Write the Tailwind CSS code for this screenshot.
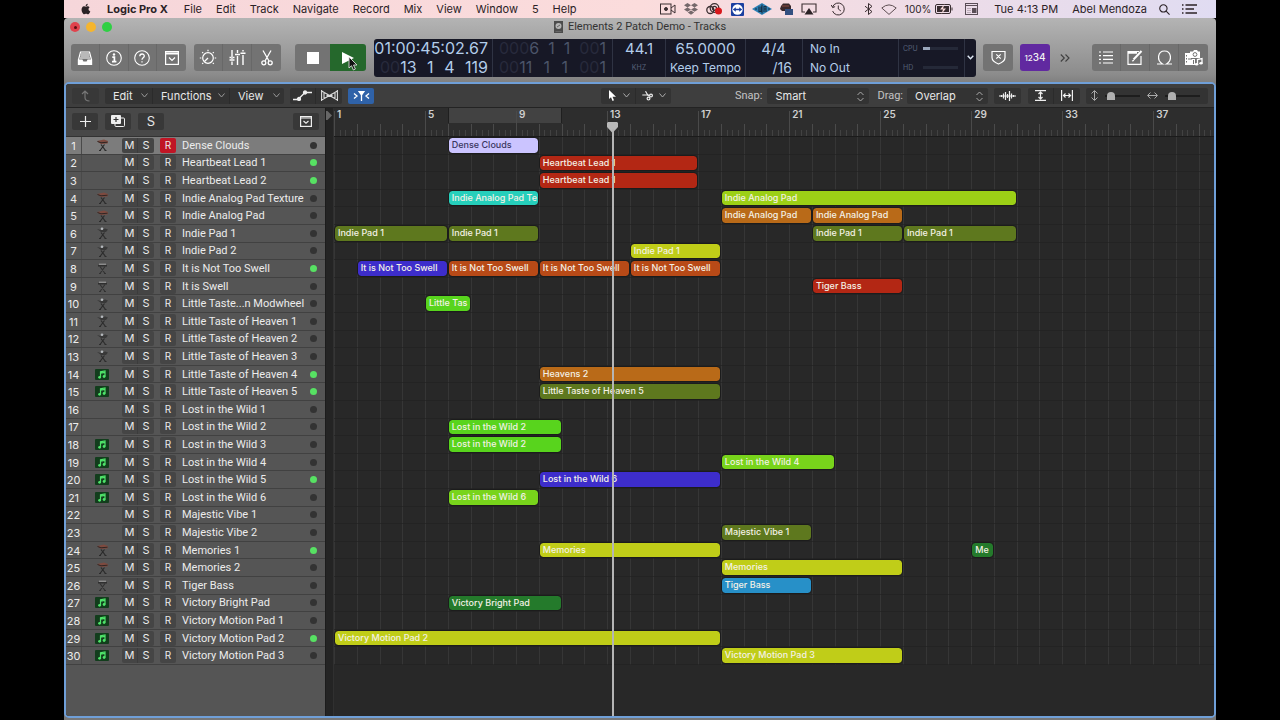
<!DOCTYPE html>
<html lang="en">
<head>
  <meta charset="UTF-8">
  <meta name="viewport" content="width=device-width, initial-scale=1.0">
  <title>Elements 2 Patch Demo - Tracks</title>
  <script src="https://cdn.jsdelivr.net/npm/@tailwindcss/browser@4"></script>
</head>

<body class="bg-black px-16 min-h-screen flex flex-col font-['Inter','Liberation_Sans',sans-serif] text-[#e4e4e4] overflow-hidden">

  <!-- System menu bar -->
  <header class="h-[18px] flex items-center pl-4 pr-[19px] text-[11px] leading-4 text-[#2b2226] bg-linear-to-r from-[#f6d6da] via-[#fbdcdc] to-[#e0dcf2] whitespace-nowrap">
    <svg class="w-3 h-3 mr-[15px]" viewBox="0 0 24 24" fill="#2b2226"><path d="M17 12.700c0-2.600 2.100-3.900 2.200-4-1.200-1.800-3.100-2-3.700-2-1.600-.2-3.100.9-3.900.9-.8 0-2-.9-3.400-.9C6.500 6.800 4.900 7.700 4 9.300c-1.900 3.200-.5 8 1.300 10.600.9 1.300 2 2.800 3.400 2.700 1.400-.1 1.900-.9 3.500-.9s2.100.9 3.500.9c1.500 0 2.400-1.300 3.300-2.600 1-1.500 1.500-3 1.500-3-.1-.1-3.500-1.300-3.500-4.300zM14.400 4.900C15.100 4 15.600 2.800 15.500 1.500c-1.100.1-2.400.7-3.100 1.600-.7.8-1.300 2-1.100 3.200 1.200.1 2.400-.6 3.100-1.400z"/></svg>
    <nav class="flex gap-[14px]">
      <b class="font-bold mr-0.5">Logic Pro X</b>
      <a href="#">File</a><a href="#">Edit</a><a href="#">Track</a><a href="#">Navigate</a><a href="#">Record</a><a href="#">Mix</a><a href="#">View</a><a href="#">Window</a><a href="#">5</a><a href="#">Help</a>
    </nav>
    <div class="ml-auto flex items-center gap-2">
      <svg class="w-4 h-3" viewBox="0 0 16 12" fill="none" stroke="#3a2e31"><rect x=".5" y="1" width="10.500" height="10"/><path d="M11 5l4-3v8l-4-3"/><circle cx="6" cy="6" r="1.500" fill="#3a2e31"/></svg>
      <svg class="w-[14px] h-3" viewBox="0 0 14 12" fill="#75686b"><path d="M3.500 0L7 2.200 3.500 4.400 0 2.200zM10.500 0L14 2.200l-3.500 2.200L7 2.200zM3.500 4.400L7 6.600 3.500 8.800 0 6.600zM10.500 4.400L14 6.600l-3.500 2.200L7 6.600zM7 7.600l3.200 2L7 11.800 3.800 9.600z"/></svg>
      <svg class="w-[17px] h-3" viewBox="0 0 17 12" fill="none" stroke="#3a2e31" stroke-width="1.300"><circle cx="8.500" cy="5" r="4.300"/><circle cx="4.300" cy="7" r="3.500"/><circle cx="8.500" cy="5.300" r="2"/><circle cx="12.500" cy="8" r="3.500" fill="#d8181c" stroke="none"/></svg>
      <svg class="w-[13px] h-[13px]" viewBox="0 0 13 13"><rect width="13" height="13" rx="1" fill="#1c3fa0"/><circle cx="6.500" cy="6.500" r="5.200" fill="#fff"/><path d="M1.800 6.500l3-2.300v1.600h3.400V4.200l3 2.300-3 2.300V7.200H4.800v1.600z" fill="#1c3fa0"/></svg>
      <svg class="w-5 h-3" viewBox="0 0 20 12"><path d="M0 6L10 0l10 6-10 6z" fill="#2b7fb4"/><path d="M3 6h2M7 3.500v5h2v-5M12 9V3.500h2V9M12 6h2M16 6h2M10 1.500v9" stroke="#172f45" stroke-width="1.100" fill="none"/></svg>
      <svg class="w-[13px] h-3" viewBox="0 0 13 12"><path d="M1 3l2-2.500h6L11 3v5H2L0 6z" fill="#38282b"/><rect x="5" y="6" width="8" height="6" fill="#334f80"/><path d="M2 3h7" stroke="#8b4d43"/></svg>
      <svg class="w-4 h-3" viewBox="0 0 16 12"><path d="M4 9H1V1h14v8h-3" fill="none" stroke="#3a2e31" stroke-width="1.100"/><path d="M8 5l4.500 6.500h-9z" fill="#2b2226"/></svg>
      <svg class="w-[14px] h-[14px] ml-[6px]" viewBox="0 0 14 14" fill="none" stroke="#3a2e31"><path d="M1.600 5a6 6 0 1 1 0 4M.3 3l1.300 2.600 2.500-1M7.300 3.500V7l2.600 2"/></svg>
      <svg class="w-[9px] h-3 ml-[11px]" viewBox="0 0 9 12" fill="none" stroke="#3a2e31"><path d="M1 3.200L8 8.600 4.500 11.500V.5L8 3.400 1 8.800"/></svg>
      <svg class="w-4 h-[11px]" viewBox="0 0 16 11" fill="none" stroke="#5d4e52"><path d="M.8 4Q8-2.200 15.200 4L8 10.400z"/></svg>
      <span class="text-[10px]">100%</span>
      <svg class="w-[18px] h-[10px] -ml-1" viewBox="0 0 18 10"><rect x=".5" y=".5" width="15" height="9" rx="1.500" fill="none" stroke="#3a2e31"/><rect x="2" y="2" width="12" height="6" fill="#3a2e31"/><path d="M9.500 0L5 5.500h3L6.500 10 11 4.500H8z" fill="#fbdcdc"/><path d="M17 3.500v3" stroke="#3a2e31"/></svg>
      <svg class="w-[13px] h-3 ml-1" viewBox="0 0 13 12"><rect x=".5" y=".5" width="12" height="11" fill="none" stroke="#5a4e57"/><path d="M.5 2.500h12" stroke="#5a4e57"/><path d="M3 5v5M5 5v5" stroke="#8d808a" stroke-dasharray="1 1"/><rect x="7" y="5" width="4.500" height="5" fill="#5a4e57"/></svg>
      <span class="ml-2">Tue 4:13 PM</span>
      <span class="ml-[6px]">Abel Mendoza</span>
      <svg class="w-[11px] h-[11px] ml-1" viewBox="0 0 12 12" fill="none" stroke="#2b2226" stroke-width="1.200"><circle cx="4.800" cy="4.800" r="4"/><path d="M7.800 7.800l3.700 3.700"/></svg>
      <svg class="w-[15px] h-[10px] ml-1" viewBox="0 0 15 10" stroke="#2b2226" stroke-width="1.300"><path d="M0 1h1.500M0 5h1.500M0 9h1.500M3.500 1H15M3.500 5H12M3.500 9H15"/></svg>
    </div>
  </header>

  <div class="grow flex flex-col rounded-t-[4px] bg-linear-to-b from-[#b4b4b4] via-[#8c8c8c] via-8% to-[#777] to-10%">

    <!-- Title bar -->
    <div class="h-[21px] px-[6px] pb-[3px] grid grid-cols-[1fr_auto_1fr] items-center text-[#333]">
      <div class="flex gap-[6px]">
        <button aria-label="Close" class="size-[10px] rounded-full bg-[#e0434d] flex items-center justify-center"><i class="size-[3px] rounded-full bg-[#5c0d12]"></i></button>
        <button aria-label="Minimise" class="size-[10px] rounded-full bg-[#f5b52e]"></button>
        <button aria-label="Zoom" class="size-[10px] rounded-full bg-[#2fd044]"></button>
      </div>
      <h1 class="flex items-center gap-[5px] font-['Roboto','Liberation_Sans',sans-serif] text-[11px] leading-4">
        <svg class="w-[9px] h-3" viewBox="0 0 9 12"><rect width="9" height="12" fill="#4c4c4c"/><circle cx="4.500" cy="5" r="3" fill="#b5b5b5"/><path d="M3 6l3-2M1.500 10.500h6" stroke="#666"/></svg>
        Elements 2 Patch Demo - Tracks
      </h1>
    </div>

    <!-- Control bar -->
    <div class="h-[43px] pl-[7px] pr-2 pb-[6px] flex items-center text-[#f2f2f2]">
      <div class="shrink-0 w-[115px] grid grid-cols-4 h-[27px] rounded-[3px] overflow-hidden bg-[#737373] divide-x divide-[#686868]">
        <button aria-label="Library" class="flex items-center justify-center"><svg class="w-4 h-4" viewBox="0 0 16 16" fill="none" stroke="#fff" stroke-width="1.200"><path d="M3.500 2h9l2 7.500v5h-13v-5z"/><path d="M4 4h8M3.500 6h9M3 8h10"/><path d="M1.500 10H5l1 2h4l1-2h3.500v4.500h-13z" fill="#fff"/></svg></button>
        <button aria-label="Inspector" class="flex items-center justify-center"><svg class="w-4 h-4" viewBox="0 0 16 16" fill="none" stroke="#fff" stroke-width="1.100"><circle cx="8" cy="8" r="7.300"/><circle cx="8" cy="4.500" r="1.200" fill="#fff" stroke="none"/><path d="M6.300 7.200H8.400v4.300M6 11.700h4.400" stroke-width="1.700"/></svg></button>
        <button aria-label="Quick Help" class="flex items-center justify-center"><svg class="w-4 h-4" viewBox="0 0 16 16" fill="none" stroke="#fff" stroke-width="1.100"><circle cx="8" cy="8" r="7.300"/><path d="M5.800 6.300c0-3 4.500-3 4.500-.3C10.300 7.800 8 7.800 8 9.800M8 11.200v1.300" stroke-width="1.300"/></svg></button>
        <button aria-label="Toolbar" class="flex items-center justify-center"><svg class="w-[14px] h-[14px]" viewBox="0 0 14 14" fill="none" stroke="#fff" stroke-width="1.200"><rect x=".6" y=".6" width="12.800" height="12.800"/><path d="M.6 2.500h12.800" stroke-width="1.800"/><path d="M4 6.500l3 3 3-3"/></svg></button>
      </div>
      <div class="shrink-0 ml-2 w-[87px] grid grid-cols-3 h-[27px] rounded-[3px] overflow-hidden bg-[#737373] divide-x divide-[#686868]">
        <button aria-label="Smart Controls" class="flex items-center justify-center"><svg class="w-[18px] h-[18px]" viewBox="0 0 18 18" fill="none" stroke="#fff" stroke-width="1.200"><circle cx="9" cy="9" r="5.300"/><path d="M9 9l-3.500 3.500"/><path d="M9 .8v1.500M3.200 3.200l1 1M14.800 3.200l-1 1M.8 9h1.500M17.200 9h-1.500M3.200 14.800l1-1M14.800 14.800l-1-1"/></svg></button>
        <button aria-label="Mixer" class="flex items-center justify-center"><svg class="w-[17px] h-4" viewBox="0 0 17 16" fill="none" stroke="#fff" stroke-width="1.400"><path d="M3 0v9M3 11.500V15M8.500 0v3M8.500 6v9M14 0v1.500M14 5v10M.5 10h5M6 4.500h5M11.500 3.200h5M.5 7.500h1.500M4 7.500h1.500"/></svg></button>
        <button aria-label="Editors" class="flex items-center justify-center"><svg class="w-3 h-4" viewBox="0 0 12 16" fill="none" stroke="#fff" stroke-width="1.300"><path d="M2 .5l6 10.500M10 .5L4 11"/><circle cx="2.800" cy="12.800" r="2"/><circle cx="9.200" cy="12.800" r="2"/></svg></button>
      </div>
      <div class="shrink-0 relative ml-[14px] flex h-[27px]">
        <button aria-label="Stop" class="w-[35px] rounded-l-[3px] bg-[#737373] flex items-center justify-center"><i class="size-3 bg-white"></i></button>
        <button aria-label="Play" class="w-[36px] rounded-r-[3px] bg-[#25682c] flex items-center justify-center"><svg class="w-3 h-3" viewBox="0 0 12 12" fill="#fff"><path d="M0 0l12 6-12 6z"/></svg></button>
        <svg class="absolute left-[53px] top-3 w-[10px] h-[15px]" viewBox="0 0 10 15"><path d="M1 1v11l2.500-2.300L5.400 14l2-1-1.900-4H9z" fill="#111" stroke="#ddd" stroke-width=".9"/></svg>
      </div>

      <!-- LCD display -->
      <div class="ml-2 grow basis-0 min-w-0 h-[38px] rounded-[3px] bg-[#171826] text-[#b3cdea] grid grid-cols-[minmax(0,119fr)_minmax(0,120fr)_minmax(0,53fr)_minmax(0,80fr)_minmax(0,57fr)_minmax(0,96fr)_minmax(0,66fr)_minmax(0,11fr)] text-[16px] leading-[19px] whitespace-nowrap divide-x divide-[#2f3343]">
        <div class="flex flex-col items-end pr-1">
          <span>01:00:45:02.67</span>
          <span class="w-[108px] flex justify-between"><span><i class="not-italic text-[#272a3c]">00</i>13</span><span>1</span><span>4</span><span>119</span></span>
        </div>
        <div class="flex flex-col px-[6px] text-[#4b5469]">
          <span class="flex justify-between"><span><i class="not-italic text-[#272a3c]">000</i>6</span><span>1</span><span>1</span><span><i class="not-italic text-[#272a3c]">00</i>1</span></span>
          <span class="flex justify-between"><span><i class="not-italic text-[#272a3c]">00</i>11</span><span>1</span><span>1</span><span><i class="not-italic text-[#272a3c]">00</i>1</span></span>
        </div>
        <div class="flex flex-col items-center"><span class="text-[15px]">44.1</span><span class="text-[7px] text-[#566078]">KHZ</span></div>
        <div class="flex flex-col items-center"><span class="text-[15px]">65.0000</span><span class="text-[12px]">Keep Tempo</span></div>
        <div class="flex flex-col items-end pr-[10px]"><span class="text-[15px] pr-[6px]">4/4</span><span class="text-[14px]">/16</span></div>
        <div class="flex flex-col pl-[7px] text-[12px]"><span>No In</span><span>No Out</span></div>
        <div class="flex flex-col pl-1 pr-[6px] text-[7px] text-[#566078]">
          <span class="flex items-center"><span class="w-[20px]">CPU</span><i class="h-[3px] grow bg-[#252938]"><i class="block h-[3px] w-[7px] bg-[#9aa7bb]"></i></i></span>
          <span class="flex items-center"><span class="w-[20px]">HD</span><i class="h-[3px] grow bg-[#252938]"></i></span>
        </div>
        <button aria-label="Display mode" class="flex items-center justify-center"><svg class="w-[7px] h-[5px]" viewBox="0 0 7 5" fill="none" stroke="#dfe8f5" stroke-width="1.400"><path d="M.7.800L3.500 3.800 6.300.800"/></svg></button>
      </div>

      <button aria-label="Replace" class="shrink-0 ml-[7px] w-[30px] h-[27px] rounded-[3px] bg-[#737373] flex items-center justify-center"><svg class="w-[15px] h-[15px]" viewBox="0 0 15 15" fill="none" stroke="#fff" stroke-width="1.200"><path d="M1 1.500h13v6c0 3.500-4 5.500-6.500 6.500C5 13 1 11 1 7.500zM5.300 4.300l4.400 4.400M9.700 4.300L5.300 8.700"/></svg></button>
      <button aria-label="Count in" class="shrink-0 ml-[7px] w-[30px] h-[27px] rounded-[3px] bg-[#6129a0] text-[10px] leading-4 font-medium"><span class="text-[8px]">12</span>34</button>
      <button aria-label="More" class="shrink-0 ml-[10px] w-[10px] h-[27px] flex items-center"><svg class="w-[10px] h-2" viewBox="0 0 10 8" fill="none" stroke="#3f3f3f" stroke-width="1.100"><path d="M.8.500L4.300 4 .8 7.500M5.500.500L9 4 5.500 7.500"/></svg></button>
      <div class="shrink-0 ml-[22px] w-[116px] grid grid-cols-4 h-[27px] rounded-[3px] overflow-hidden bg-[#737373] divide-x divide-[#686868]">
        <button aria-label="List Editors" class="flex items-center justify-center"><svg class="w-[14px] h-[13px]" viewBox="0 0 14 13" stroke="#fff" stroke-width="1.200"><path d="M0 1h2M0 4.600h2M0 8.300h2M0 12h2M4 1h10M4 4.600h10M4 8.300h10M4 12h10"/></svg></button>
        <button aria-label="Note Pads" class="flex items-center justify-center"><svg class="w-4 h-[15px]" viewBox="0 0 16 15" fill="none" stroke="#fff" stroke-width="1.200"><path d="M14 6v8.300H1V1.500h11"/><path d="M1 2.800h9" stroke-width="2"/><path d="M6.500 9.500L14.500 1" stroke-width="2"/><path d="M5 11l2-.6"/></svg></button>
        <button aria-label="Apple Loops" class="flex items-center justify-center"><svg class="w-[15px] h-[15px]" viewBox="0 0 15 15" fill="none" stroke="#fff" stroke-width="1.200"><path d="M0 14h5.500c-6-3.500-5-13 2-13s8 9.500 2 13H15"/></svg></button>
        <button aria-label="Browsers" class="flex items-center justify-center"><svg class="w-[18px] h-4" viewBox="0 0 18 16"><path d="M0 3h6v12H0z" fill="#fff"/><path d="M6 9h4v6H6z" fill="#fff"/><path d="M1.500 5v9" stroke="#737373" stroke-dasharray="1.500 1.500"/><path d="M3 9h4M8.500 10v4" stroke="#737373"/><path d="M5 1.500h3L9 0h3l1 1.500h2V8H5z" fill="#fff"/><circle cx="10" cy="4.500" r="1.900" fill="none" stroke="#737373"/><path d="M12.500 14V9.500l4.500-1V13" fill="none" stroke="#fff" stroke-width="1.300"/><ellipse cx="11.600" cy="14.200" rx="1.700" ry="1.300" fill="#fff"/><ellipse cx="16" cy="13.200" rx="1.700" ry="1.300" fill="#fff"/></svg></button>
      </div>
    </div>

    <!-- Tracks window -->
    <main class="grow flex flex-col mb-[2px] border-2 border-[#6f9fd8] rounded-[5px] bg-[#282828] overflow-hidden">

      <!-- Tracks menu bar -->
      <div class="h-6 px-[6px] flex items-center bg-[#3e3e3e] border-b border-[#232323] text-[11px] leading-4 text-[#e8e8e8]">
        <button aria-label="Up" class="w-[27px] h-4 rounded-[2px] bg-[#383838] flex items-center justify-center"><svg class="w-[9px] h-3" viewBox="0 0 9 12" fill="none" stroke="#777" stroke-width="1.200"><path d="M1 4l3-3 3 3M4 1v6.500Q4 11 8.500 11"/></svg></button>
        <div class="ml-[6px] flex h-4 rounded-[2px] bg-[#333] divide-x divide-[#2b2b2b]">
          <button class="w-[48px] pl-2 pr-1 flex items-center justify-between">Edit<svg class="w-[7px] h-[5px]" viewBox="0 0 7 5" fill="none" stroke="#999"><path d="M.5.500l3 3.500 3-3.500"/></svg></button>
          <button class="w-[77px] pl-2 pr-1 flex items-center justify-between">Functions<svg class="w-[7px] h-[5px]" viewBox="0 0 7 5" fill="none" stroke="#999"><path d="M.5.500l3 3.500 3-3.500"/></svg></button>
          <button class="w-[54px] pl-2 pr-1 flex items-center justify-between">View<svg class="w-[7px] h-[5px]" viewBox="0 0 7 5" fill="none" stroke="#999"><path d="M.5.500l3 3.500 3-3.500"/></svg></button>
        </div>
        <div class="ml-[6px] flex h-4 rounded-[2px] bg-[#333] divide-x divide-[#2b2b2b]">
          <button aria-label="Automation" class="w-[26px] flex items-center justify-center"><svg class="w-[19px] h-[11px]" viewBox="0 0 19 11" fill="none" stroke="#eee" stroke-width="1.300"><path d="M0 9.500h5l7-7h7"/><circle cx="6" cy="9" r="1.500" fill="#eee"/><circle cx="12" cy="2.500" r="1.500" fill="#eee"/></svg></button>
          <button aria-label="Flex" class="w-[26px] flex items-center justify-center"><svg class="w-[17px] h-[11px]" viewBox="0 0 17 11" fill="none" stroke="#ddd" stroke-width="1.100"><path d="M.6 0v11M16.400 0v11M.6 1l15.800 9M.6 10L16.400 1M6 3.500v4M11 3.500v4M3 2v7M14 2v7"/></svg></button>
        </div>
        <button aria-label="Catch playhead" class="ml-[6px] w-[26px] h-4 rounded-[2px] bg-[#2f62a8] flex items-center justify-center"><svg class="w-[17px] h-[10px]" viewBox="0 0 17 10" fill="none" stroke="#fff" stroke-width="1.300"><path d="M1 2.500L4 5 1 7.500M16 2.500L13 5l3 2.500M8.500 2v8"/><path d="M6 .5h5L8.500 4z" fill="#fff"/></svg></button>
        <div class="ml-auto mr-16 flex h-4 rounded-[2px] bg-[#333] divide-x divide-[#2b2b2b]">
          <button aria-label="Pointer tool" class="w-[35px] pl-2 pr-[5px] flex items-center justify-between"><svg class="w-[7px] h-[11px]" viewBox="0 0 7 11" fill="#fff"><path d="M0 0v9l2-1.800L3.500 11l1.500-.7L3.500 6.800H7z"/></svg><svg class="w-[7px] h-[5px]" viewBox="0 0 7 5" fill="none" stroke="#aaa"><path d="M.5.500l3 3.500 3-3.500"/></svg></button>
          <button aria-label="Scissors tool" class="w-[35px] pl-[6px] pr-[5px] flex items-center justify-between"><svg class="w-[11px] h-[10px]" viewBox="0 0 11 10" fill="none" stroke="#eee" stroke-width="1.200"><path d="M.3 4h7M3.500.300l3 5"/><circle cx="9" cy="4.600" r="1.400"/><circle cx="6.500" cy="7.600" r="1.400"/></svg><svg class="w-[7px] h-[5px]" viewBox="0 0 7 5" fill="none" stroke="#aaa"><path d="M.5.500l3 3.500 3-3.500"/></svg></button>
        </div>
        <label for="snap" class="font-['Roboto','Liberation_Sans',sans-serif] text-[#c4c4c4]">Snap:</label>
        <div class="relative ml-[5px] mr-[8px]">
          <select id="snap" class="block appearance-none w-[102px] h-4 rounded-[2px] bg-[#333] pl-2 leading-4"><option>Smart</option></select>
          <svg class="absolute right-[5px] top-[3px] w-[7px] h-[11px] pointer-events-none" viewBox="0 0 7 11" fill="none" stroke="#aaa"><path d="M.5 4l3-3 3 3M.5 7l3 3 3-3"/></svg>
        </div>
        <label for="drag" class="font-['Roboto','Liberation_Sans',sans-serif] text-[#c4c4c4]">Drag:</label>
        <div class="relative ml-[4px]">
          <select id="drag" class="block appearance-none w-[81px] h-4 rounded-[2px] bg-[#333] pl-2 leading-4"><option>Overlap</option></select>
          <svg class="absolute right-[5px] top-[3px] w-[7px] h-[11px] pointer-events-none" viewBox="0 0 7 11" fill="none" stroke="#aaa"><path d="M.5 4l3-3 3 3M.5 7l3 3 3-3"/></svg>
        </div>
        <button aria-label="Waveform zoom" class="ml-[6px] w-[27px] h-4 rounded-[2px] bg-[#333] flex items-center justify-center"><svg class="w-[17px] h-[10px]" viewBox="0 0 17 10" stroke="#eee" stroke-width="1.200"><path d="M0 5h17M2.500 4v2M4.500 2.500v5M6.500 1v8M8.500 3v4M10.500 0v10M12.500 2.500v5M14.500 4v2"/></svg></button>
        <div class="ml-[7px] flex h-4 rounded-[2px] bg-[#333] divide-x divide-[#2b2b2b]">
          <button aria-label="Fit vertically" class="w-[26px] flex items-center justify-center"><svg class="w-[11px] h-[11px]" viewBox="0 0 11 11" fill="none" stroke="#eee" stroke-width="1.200"><path d="M0 .6h11M0 10.400h11M5.500 2.500v6M3.500 4l2-2 2 2M3.500 7l2 2 2-2"/></svg></button>
          <button aria-label="Fit horizontally" class="w-[26px] flex items-center justify-center"><svg class="w-[12px] h-[11px]" viewBox="0 0 12 11" fill="none" stroke="#eee" stroke-width="1.200"><path d="M.6 0v11M11.400 0v11M2.500 5.500h7M4.500 3.500l-2 2 2 2M7.500 3.500l2 2-2 2"/></svg></button>
        </div>
        <div class="ml-[6px] w-[122px] h-4 rounded-[2px] bg-[#333] pl-[5px] pr-[8px] flex items-center justify-between">
          <svg class="w-[7px] h-[11px]" viewBox="0 0 7 11" fill="none" stroke="#aaa"><path d="M.5 3.500l3-3 3 3M.5 7.500l3 3 3-3M3.500 1v9"/></svg>
          <input type="range" aria-label="Vertical zoom" value="8" class="appearance-none w-[35px] h-[2px] bg-[#1d1d1d] [&::-webkit-slider-thumb]:appearance-none [&::-webkit-slider-thumb]:w-2 [&::-webkit-slider-thumb]:h-2 [&::-webkit-slider-thumb]:rounded-t-full [&::-webkit-slider-thumb]:rounded-b-[1px] [&::-webkit-slider-thumb]:bg-[#b0b0b0]">
          <svg class="w-[11px] h-[7px]" viewBox="0 0 11 7" fill="none" stroke="#aaa"><path d="M3.500.500l-3 3 3 3M7.500.500l3 3-3 3M1 3.500h9"/></svg>
          <input type="range" aria-label="Horizontal zoom" value="12" class="appearance-none w-[35px] h-[2px] bg-[#1d1d1d] [&::-webkit-slider-thumb]:appearance-none [&::-webkit-slider-thumb]:w-2 [&::-webkit-slider-thumb]:h-2 [&::-webkit-slider-thumb]:rounded-t-full [&::-webkit-slider-thumb]:rounded-b-[1px] [&::-webkit-slider-thumb]:bg-[#b0b0b0]">
        </div>
      </div>

      <div class="grow flex">
        <!-- Track headers -->
        <section class="w-[259px] shrink-0 bg-[#555]">
          <div class="h-[29px] px-[6px] pb-[2px] flex items-center bg-[#484848] border-b border-[#333]">
            <button aria-label="Add track" class="w-[26px] h-[17px] rounded-[2px] bg-[#383838] flex items-center justify-center"><svg class="w-[11px] h-[11px]" viewBox="0 0 11 11" stroke="#eee" stroke-width="1.200"><path d="M5.500 0v11M0 5.500h11"/></svg></button>
            <button aria-label="Duplicate track" class="ml-[7px] w-[26px] h-[17px] rounded-[2px] bg-[#383838] flex items-center justify-center"><svg class="w-[14px] h-[12px]" viewBox="0 0 14 12"><rect x="4" y="3" width="9.500" height="8.500" rx="1" fill="none" stroke="#eee"/><rect width="10" height="9" rx="1" fill="#eee"/><path d="M5 2v5M2.500 4.500h5" stroke="#333" stroke-width="1.200"/></svg></button>
            <button aria-label="Global solo" class="ml-[7px] w-[26px] h-[17px] rounded-[2px] bg-[#383838] text-[13px] leading-4">S</button>
            <button aria-label="Header options" class="ml-auto w-[26px] h-[17px] rounded-[2px] bg-[#383838] flex items-center justify-center"><svg class="w-3 h-[11px]" viewBox="0 0 12 11" fill="none" stroke="#eee" stroke-width="1.200"><rect x=".6" y=".6" width="10.800" height="9.800"/><path d="M.6 2h10.800M3.500 5L6 7.300 8.500 5"/></svg></button>
          </div>
          <div id="trackList" class="h-[528px] grid grid-rows-30"></div>
        </section>

        <!-- Timeline -->
        <section class="grow flex border-l border-[#1c1c1c] bg-[#282828]">
          <div class="w-2 pt-[3px] bg-[#242424] border-r border-[#303030]"><svg class="w-[6px] h-[9px]" viewBox="0 0 6 9" fill="#666"><path d="M0 0h1.500L6 4.500 1.500 9H0z"/></svg></div>
          <div id="timeline" class="grow relative flex flex-col">
            <div id="ruler" class="h-[29px] relative bg-[#2d2d2d] border-b border-[#1b1b1b] text-[10px] leading-4 font-semibold text-[#cfcfcf] overflow-hidden">
              <div id="cycle" class="absolute top-0 h-[15px] bg-[#424242] border-x border-[#1f1f1f]"></div>
            </div>
            <div class="relative h-[528px]">
              <div id="gridLines" class="absolute inset-0"></div>
              <div id="lanes" class="relative h-full grid grid-rows-30"></div>
            </div>
            <div id="playhead" class="absolute top-[14px] bottom-0 w-[11px] -ml-[5px] flex flex-col items-center">
              <svg class="w-[11px] h-[11px]" viewBox="0 0 11 11"><path d="M1 0h9l1 1v4L5.500 11 0 5V1z" fill="#b9b9b9"/></svg>
              <div class="grow w-[2px] -mt-1 bg-[#b5b5b5]"></div>
            </div>
          </div>
        </section>
      </div>
    </main>
  </div>

  <script>
    const BARS = 38.67; // bars that fit across the timeline
    const pos = bar => (bar - 1) / BARS * 100 + '%';

    const icons = {
      wood: `<svg class="w-[13px] h-3" viewBox="0 0 13 12" fill="none"><path d="M4 11.500l4.500-6M9.500 11.500L5 5.500M3 11.500h2M8.500 11.500h2" stroke="#2b2b2b" stroke-width="1.200"/><path d="M1 2L8 .5l4 1.500-.5 2.500L5 5z" fill="#7d4a3f"/><path d="M1.500 2.500l3.500 1.300 6.500-.6" stroke="#2f2523"/></svg>`,
      dark: `<svg class="w-[13px] h-3" viewBox="0 0 13 12" fill="none"><path d="M4 11.500l4.500-6M9.500 11.500L5 5.500M3 11.500h2M8.500 11.500h2" stroke="#2d2d2d" stroke-width="1.200"/><path d="M1 2l4 1 4-1.500 3 1L10 5H5z" fill="#383838"/><circle cx="6" cy="1.800" r="1.300" fill="#b5b9bd"/></svg>`,
      synth: `<svg class="w-[13px] h-3" viewBox="0 0 13 12" fill="none"><path d="M4 11.500l5-7M9 11.500l-5-7M3 11.500h2M8 11.500h2" stroke="#333" stroke-width="1.200"/><path d="M2 3h9v1.500H2z" fill="#2f2f2f"/><path d="M3 2.200h7" stroke="#a5a5a5"/></svg>`,
      midi: `<svg class="w-[14px] h-[11px]" viewBox="0 0 14 11"><rect width="14" height="11" rx="1" fill="#123d1c"/><path d="M5.500 8.300V2.800l4.500-.8v5.500M5.500 4.200l4.500-.8" stroke="#4fe46a" fill="none" stroke-width="1.200"/><circle cx="4.600" cy="8.300" r="1.400" fill="#4fe46a"/><circle cx="9.100" cy="7.500" r="1.400" fill="#4fe46a"/></svg>`,
      none: ''
    };

    // name, icon, active, regions [label, colour, start bar, end bar]
    const tracks = [
      ['Dense Clouds', 'wood', 0, [['Dense Clouds', '#cbc4ff', 6, 10]]],
      ['Heartbeat Lead 1', 'none', 1, [['Heartbeat Lead 1', '#b32714', 10, 17]]],
      ['Heartbeat Lead 2', 'none', 1, [['Heartbeat Lead 1', '#b32714', 10, 17]]],
      ['Indie Analog Pad Texture', 'wood', 0, [['Indie Analog Pad Te', '#26cfbb', 6, 10], ['Indie Analog Pad', '#9cd016', 18, 31]]],
      ['Indie Analog Pad', 'wood', 0, [['Indie Analog Pad', '#b96a18', 18, 22], ['Indie Analog Pad', '#b96a18', 22, 26]]],
      ['Indie Pad 1', 'dark', 0, [['Indie Pad 1', '#5e781e', 1, 6], ['Indie Pad 1', '#5e781e', 6, 10], ['Indie Pad 1', '#5e781e', 22, 26], ['Indie Pad 1', '#5e781e', 26, 31]]],
      ['Indie Pad 2', 'dark', 0, [['Indie Pad 1', '#c0cd18', 14, 18]]],
      ['It is Not Too Swell', 'synth', 1, [['It is Not Too Swell', '#3d2dcb', 2, 6], ['It is Not Too Swell', '#b84a17', 6, 10], ['It is Not Too Swell', '#b84a17', 10, 14], ['It is Not Too Swell', '#b84a17', 14, 18]]],
      ['It is Swell', 'synth', 0, [['Tiger Bass', '#b32714', 22, 26]]],
      ['Little Taste...n Modwheel', 'dark', 0, [['Little Tas', '#58d41d', 5, 7]]],
      ['Little Taste of Heaven 1', 'dark', 0, []],
      ['Little Taste of Heaven 2', 'dark', 0, []],
      ['Little Taste of Heaven 3', 'dark', 0, []],
      ['Little Taste of Heaven 4', 'midi', 1, [['Heavens 2', '#b96a18', 10, 18]]],
      ['Little Taste of Heaven 5', 'midi', 1, [['Little Taste of Heaven 5', '#5e781e', 10, 18]]],
      ['Lost in the Wild 1', 'none', 0, []],
      ['Lost in the Wild 2', 'none', 0, [['Lost in the Wild 2', '#58d41d', 6, 11]]],
      ['Lost in the Wild 3', 'midi', 0, [['Lost in the Wild 2', '#58d41d', 6, 11]]],
      ['Lost in the Wild 4', 'midi', 0, [['Lost in the Wild 4', '#78d41b', 18, 23]]],
      ['Lost in the Wild 5', 'midi', 1, [['Lost in the Wild 6', '#3d2dcb', 10, 18]]],
      ['Lost in the Wild 6', 'midi', 0, [['Lost in the Wild 6', '#78d41b', 6, 10]]],
      ['Majestic Vibe 1', 'none', 0, []],
      ['Majestic Vibe 2', 'none', 0, [['Majestic Vibe 1', '#5e781e', 18, 22]]],
      ['Memories 1', 'wood', 1, [['Memories', '#c0cd18', 10, 18], ['Me', '#247a2b', 29, 30]]],
      ['Memories 2', 'wood', 0, [['Memories', '#c0cd18', 18, 26]]],
      ['Tiger Bass', 'synth', 0, [['Tiger Bass', '#2790c8', 18, 22]]],
      ['Victory Bright Pad', 'midi', 0, [['Victory Bright Pad', '#247a2b', 6, 11]]],
      ['Victory Motion Pad 1', 'midi', 0, []],
      ['Victory Motion Pad 2', 'midi', 1, [['Victory Motion Pad 2', '#c0cd18', 1, 18]]],
      ['Victory Motion Pad 3', 'midi', 0, [['Victory Motion Pad 3', '#c0cd18', 18, 26]]]
    ];

    const trackList = document.getElementById('trackList');
    const lanes = document.getElementById('lanes');

    tracks.forEach(([name, icon, active, regions], i) => {
      const row = document.createElement('div');
      row.className = 'flex items-center border-b border-[#414141] text-[11px] leading-4 text-[#ececec] whitespace-nowrap ' + (i === 0 ? 'bg-[#7c7c7c]' : 'bg-[#555]');
      row.innerHTML = `
        <span class="w-4 h-full pt-px flex items-center justify-center border-r border-[#4a4a4a]">${i + 1}</span>
        <span class="w-10 flex justify-center">${icons[icon]}</span>
        <span class="flex h-[15px] rounded-[2px] bg-[#454545] divide-x divide-[#3c3c3c]">
          <button aria-label="Mute ${name}" class="w-4 leading-[15px]">M</button><button aria-label="Solo ${name}" class="w-4 leading-[15px]">S</button>
        </span>
        <button aria-label="Record ${name}" class="ml-[6px] w-4 h-[15px] leading-[15px] rounded-[2px] text-[10px] ${i === 0 ? 'bg-[#c01525]' : 'bg-[#454545]'}">R</button>
        <span class="ml-[6px] grow pt-px font-['Roboto','Liberation_Sans',sans-serif]">${name}</span>
        <i class="mr-2 size-[7px] rounded-full ${active ? 'bg-[#57e163]' : 'bg-[#333]'}"></i>`;
      trackList.appendChild(row);

      const lane = document.createElement('div');
      lane.className = 'relative border-b border-[#1f1f1f]/60';
      regions.forEach(([label, color, start, end]) => {
        const r = document.createElement('div');
        r.className = 'absolute top-0 bottom-0 rounded-[4px] border border-[#1c1c1c] bg-clip-padding pl-[3px] text-[9px] leading-[14px] font-medium overflow-hidden whitespace-nowrap ' + (i === 0 ? 'text-[#3a3660]' : 'text-[#f4f1e6]');
        r.style.left = pos(start);
        r.style.width = (end - start) / BARS * 100 + '%';
        r.style.backgroundColor = color;
        r.textContent = label;
        lane.appendChild(r);
      });
      lanes.appendChild(lane);
    });

    // Ruler and grid lines
    const ruler = document.getElementById('ruler');
    const gridLines = document.getElementById('gridLines');
    const addLine = (parent, cls, bar) => {
      const el = document.createElement('div');
      el.className = cls;
      el.style.left = pos(bar);
      parent.appendChild(el);
      return el;
    };
    for (let bar = 1; bar < 1 + BARS; bar++) {
      addLine(gridLines, 'absolute inset-y-0 w-px bg-[#363636]', bar);
      if (bar % 4 === 1) {
        addLine(ruler, 'absolute top-[3px] bottom-0 w-px bg-[#4a4a4a]', bar);
        addLine(ruler, 'absolute top-[-2px] pl-[3px]', bar).textContent = bar;
      } else {
        addLine(ruler, 'absolute top-4 bottom-0 w-px bg-[#4a4a4a]', bar);
      }
      for (let q = 1; q < 4; q++) {
        addLine(ruler, 'absolute top-[22px] bottom-0 w-px bg-[#424242]', bar + q / 4);
      }
    }
    const cycle = document.getElementById('cycle');
    cycle.style.left = pos(6);
    cycle.style.width = 5 / BARS * 100 + '%';
    document.getElementById('playhead').style.left = pos(13.22);
  </script>

</body>
</html>
